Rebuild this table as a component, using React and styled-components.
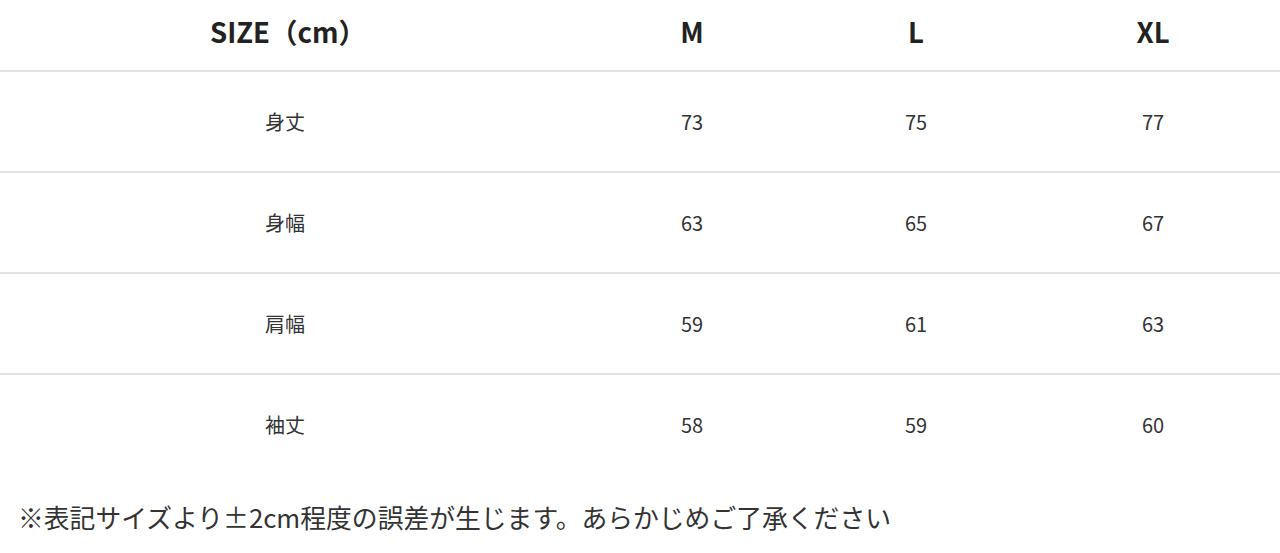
import styled, { createGlobalStyle } from 'styled-components';

const GlobalStyle = createGlobalStyle`
    body {
        margin: 0;
        background: #ffffff;
        font-family: "Noto Sans CJK JP", "Noto Sans", sans-serif;
        color: #333333;
    }
`

const rows = [
    { name: "身丈", values: [73, 75, 77] },
    { name: "身幅", values: [63, 65, 67] },
    { name: "肩幅", values: [59, 61, 63] },
    { name: "袖丈", values: [58, 59, 60] },
];

const sizes = ["M", "L", "XL"];

export default function App() {
    return (
        <>
            <GlobalStyle />
            <Table>
                <HeadRow>
                    <HeadCell>SIZE（cm）</HeadCell>
                    {sizes.map(size => (
                        <HeadCell key={size}>{size}</HeadCell>
                    ))}
                </HeadRow>
                {rows.map((row, i) => (
                    <BodyRow key={row.name} last={i === rows.length - 1}>
                        <Cell>{row.name}</Cell>
                        {row.values.map((value, j) => (
                            <Cell key={j}>{value}</Cell>
                        ))}
                    </BodyRow>
                ))}
            </Table>
            <Note>※表記サイズより±2cm程度の誤差が生じます。あらかじめご了承ください</Note>
        </>
    )
}

const Table = styled.div`
    width: 1280px;
    display: flex;
    flex-direction: column;
`
const Row = styled.div`
    display: grid;
    grid-template-columns: 570px 244px 204px 1fr;
    align-items: center;

    & > div:last-child {
        padding-left: 8px;
    }
`
const HeadRow = styled(Row)`
    height: 70px;
    border-bottom: 2px solid #e2e2e2;
`
const BodyRow = styled(Row)`
    height: 99px;
    border-bottom: ${props => props.last ? "none" : "2px solid #e2e2e2"};
`
const HeadCell = styled.div`
    text-align: center;
    font-size: 27.5px;
    font-weight: 700;
    color: #222222;
    line-height: 1;
    padding-bottom: 7px;

    &:first-child {
        padding-left: 6px;
    }
`
const Cell = styled.div`
    text-align: center;
    font-size: 20px;
    font-weight: 400;
    color: #333333;
    line-height: 1;
`
const Note = styled.p`
    margin: 24px 0 0 18px;
    font-size: 25.8px;
    line-height: 38px;
    color: #333333;
`
